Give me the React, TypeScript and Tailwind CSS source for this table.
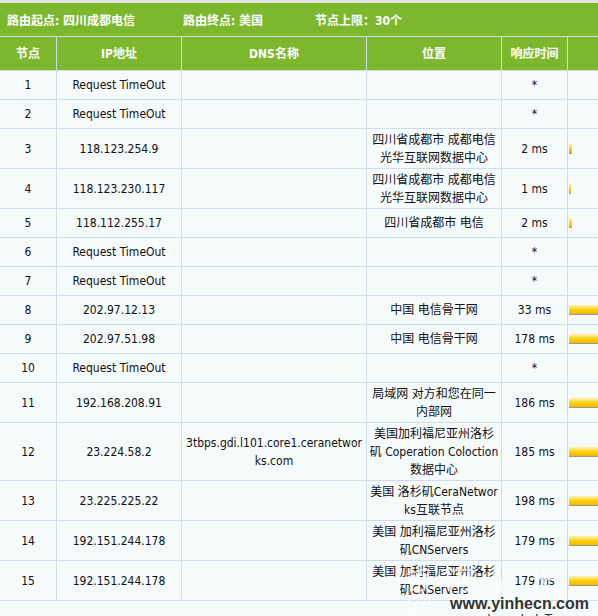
import React from 'react';

interface Hop {
  no: number;
  ip: string;
  dns: string[];
  loc: string[];
  ms: number | null;
}

const hops: Hop[] = [
  { no: 1, ip: 'Request TimeOut', dns: [], loc: [], ms: null },
  { no: 2, ip: 'Request TimeOut', dns: [], loc: [], ms: null },
  { no: 3, ip: '118.123.254.9', dns: [], loc: ['四川省成都市 成都电信', '光华互联网数据中心'], ms: 2 },
  { no: 4, ip: '118.123.230.117', dns: [], loc: ['四川省成都市 成都电信', '光华互联网数据中心'], ms: 1 },
  { no: 5, ip: '118.112.255.17', dns: [], loc: ['四川省成都市 电信'], ms: 2 },
  { no: 6, ip: 'Request TimeOut', dns: [], loc: [], ms: null },
  { no: 7, ip: 'Request TimeOut', dns: [], loc: [], ms: null },
  { no: 8, ip: '202.97.12.13', dns: [], loc: ['中国 电信骨干网'], ms: 33 },
  { no: 9, ip: '202.97.51.98', dns: [], loc: ['中国 电信骨干网'], ms: 178 },
  { no: 10, ip: 'Request TimeOut', dns: [], loc: [], ms: null },
  { no: 11, ip: '192.168.208.91', dns: [], loc: ['局域网 对方和您在同一', '内部网'], ms: 186 },
  {
    no: 12,
    ip: '23.224.58.2',
    dns: ['3tbps.gdi.l101.core1.ceranetwor', 'ks.com'],
    loc: ['美国加利福尼亚州洛杉', '矶 Coperation Coloction', '数据中心'],
    ms: 185,
  },
  { no: 13, ip: '23.225.225.22', dns: [], loc: ['美国 洛杉矶CeraNetwor', 'ks互联节点'], ms: 198 },
  { no: 14, ip: '192.151.244.178', dns: [], loc: ['美国 加利福尼亚州洛杉', '矶CNServers'], ms: 179 },
  { no: 15, ip: '192.151.244.178', dns: [], loc: ['美国 加利福尼亚州洛杉', '矶CNServers'], ms: 179 },
];

const cols = 'grid grid-cols-[56px_124px_184px_134px_65px_1fr] gap-x-px';
const cell = 'bg-[#f5fafb] min-h-[28px] py-[1.5px] flex flex-col items-center justify-center text-center whitespace-nowrap';

function Lines({ lines }: { lines: string[] }) {
  return (
    <>
      {lines.map((l, i) => (
        <div key={i}>{l}</div>
      ))}
    </>
  );
}

export default function App() {
  return (
    <div className="relative w-[598px] h-[616px] overflow-hidden bg-[#f5fafb] font-['DejaVu_Sans_Condensed','DejaVu_Sans','Noto_Sans_CJK_SC',sans-serif] font-stretch-semi-condensed text-[12px] leading-[18px] text-[#111]">
      <div className="h-[3px] bg-[#dfe4e0]" />
      <div className="h-[33px] bg-[#7cb72e] flex items-center pl-[7px] pt-[2px] font-bold text-white">
        <span className="w-[176px]">路由起点: 四川成都电信</span>
        <span className="w-[132px]">路由终点: 美国</span>
        <span>节点上限：30个</span>
      </div>
      <div className="h-px bg-[#cfdcec]" />
      <div className="flex flex-col gap-y-px bg-[#cddbed]">
        <div className={`${cols} h-[33px]`}>
          {['节点', 'IP地址', 'DNS名称', '位置', '响应时间', ''].map((h, i) => (
            <div key={i} className="bg-[#7cb72e] flex items-center justify-center font-bold text-white">
              {h}
            </div>
          ))}
        </div>
        {hops.map((h) => (
          <div key={h.no} className={cols}>
            <div className={cell}>{h.no}</div>
            <div className={cell}>{h.ip}</div>
            <div className={cell}>
              <Lines lines={h.dns} />
            </div>
            <div className={cell}>
              <Lines lines={h.loc} />
            </div>
            <div className={cell}>{h.ms === null ? '*' : `${h.ms} ms`}</div>
            <div className="bg-[#f5fafb] flex items-center overflow-hidden pl-px">
              {h.ms !== null && (
                <div
                  className="h-[10px] shrink-0 bg-gradient-to-b from-[#fff2a8] via-[#ffd200] to-[#f2b600] border-b border-[#9a9a9a]"
                  style={{ width: Math.max(1, Math.round(h.ms * 1.5)) }}
                />
              )}
            </div>
          </div>
        ))}
        <div className="h-[40px] bg-[#f5fafb]" />
      </div>

      <div className="absolute left-[406px] top-[566px] text-[26px] leading-none tracking-[15px] text-white/70 font-['Noto_Sans_CJK_SC',sans-serif] pointer-events-none">
        银河站长网
      </div>
      <div className="absolute left-[450px] top-[595px] text-[16px] leading-[18px] font-bold text-[#333] font-['Liberation_Sans',sans-serif] [text-shadow:0_0_2px_#fff]">
        www.yinhecn.com
      </div>
      <div className="absolute left-[468px] top-[612px] text-[13px] leading-[14px] text-[#333] font-['Liberation_Sans',sans-serif]">
        cschengdudxTrace.com
      </div>
    </div>
  );
}
